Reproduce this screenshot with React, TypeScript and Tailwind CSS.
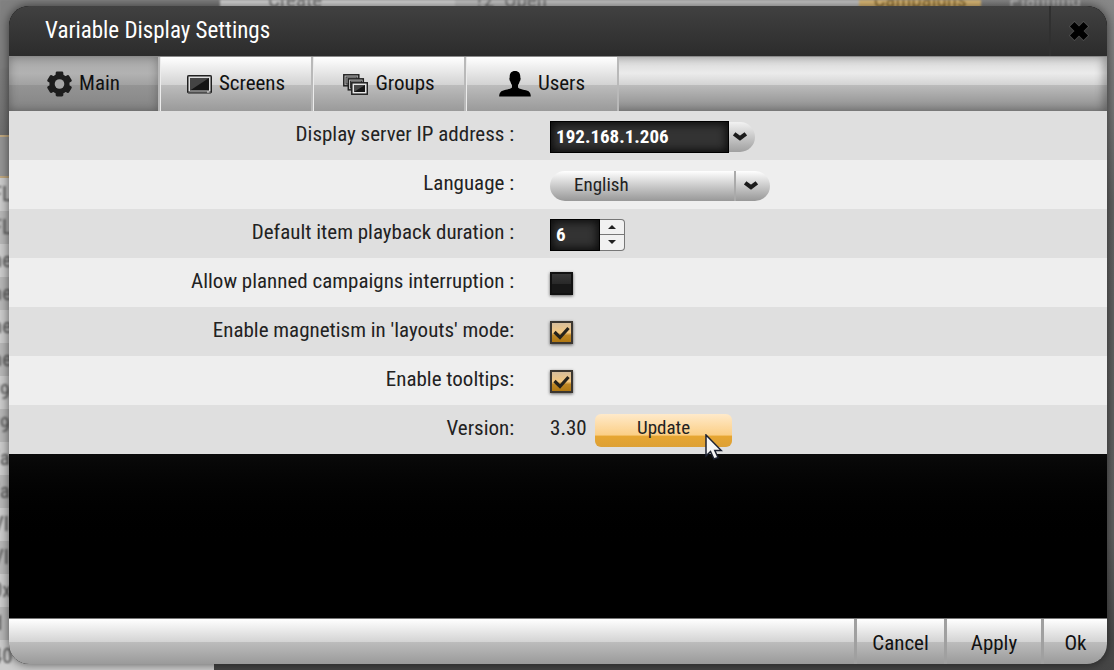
import { ComponentProps, ReactNode, useState } from 'react'
import { twMerge } from 'tailwind-merge'

const glossStyles =
  'bg-[linear-gradient(#ffffff_0%,#d3d3d3_51%,#bcbcbc_52%,#9a9a9a_100%)]'
const fieldStyles =
  'border border-black bg-[#333] px-[5px] font-bold text-white text-[19px] shadow-[inset_0_0_8px_2px_#0c0c0c] outline-none'

/* --- Icons --- */
const GearIcon = () => (
  <svg width="25" height="26" viewBox="0 0 26 26" aria-hidden="true">
    <g fill="#1d1d1d">
      {[0, 60, 120].map((angle) => (
        <rect
          key={angle}
          x="9"
          y="0"
          width="8"
          height="26"
          rx="1.5"
          transform={`rotate(${angle} 13 13)`}
        />
      ))}
      <circle cx="13" cy="13" r="10.5" />
    </g>
    <circle cx="13" cy="13" r="5" fill="#a6a6a6" />
  </svg>
)

const ScreenIcon = () => (
  <svg width="25" height="19" viewBox="0 0 25 19" aria-hidden="true">
    <rect x="0.5" y="0.5" width="24" height="17.5" rx="1" fill="#ddd" stroke="#1c1c1c" />
    <rect x="1" y="1" width="23" height="16" fill="none" stroke="#222" />
    <rect x="3" y="3" width="19" height="12.5" fill="#151515" />
    <path d="M3 3H22L3 15.5Z" fill="#444" />
    <path d="M20 17h2.500" stroke="#eee" />
  </svg>
)

const GroupsIcon = () => (
  <svg width="25" height="21" viewBox="0 0 25 21" aria-hidden="true">
    {[0, 4.5].map((offset) => (
      <g key={offset} transform={`translate(${offset} ${offset * 0.9})`}>
        <rect x="0.8" y="0.8" width="15" height="11" fill="#c9c9c9" stroke="#222" strokeWidth="1.5" />
        <rect x="3" y="3" width="11" height="7" fill="#aaa" stroke="#333" />
      </g>
    ))}
    <rect x="8.800" y="8.800" width="15.500" height="11.400" fill="#e6e6e6" stroke="#222" strokeWidth="1.500" />
    <rect x="11" y="11" width="11" height="7" fill="#151515" />
    <path d="M11 11H22L11 18Z" fill="#484848" />
  </svg>
)

const UserIcon = () => (
  <svg width="32" height="26" viewBox="0 0 32 26" aria-hidden="true">
    <path
      d="M16 0C12 0 10.500 2.500 10.700 6.500C10 7 10.500 10 11.400 10.500C11.800 12.500 12.500 13.500 13 14V16.500C12 18 9 18.300 5 19.300C1.500 20.200 .3 22 .2 25.500H31.800C31.700 22 30.500 20.200 27 19.300C23 18.300 20 18 19 16.500V14C19.500 13.500 20.200 12.500 20.600 10.500C21.500 10 22 7 21.300 6.500C21.500 2.500 20 0 16 0Z"
      fill="#000"
    />
  </svg>
)

const ChevronIcon = () => (
  <svg width="14" height="10" viewBox="0 0 14 10" aria-hidden="true">
    <path d="M2.800 3 7 6.200 11.200 3" fill="none" stroke="#1b1b1b" strokeWidth="4" strokeLinecap="square" />
  </svg>
)

const CloseIcon = () => (
  <svg width="20" height="20" viewBox="0 0 20 20" aria-hidden="true">
    <path d="M5.500 5.500 14.500 14.500M14.500 5.500 5.500 14.500" stroke="#666" strokeWidth="8" strokeLinecap="square" strokeLinejoin="round" opacity=".5" />
    <path d="M5.500 5.500 14.500 14.500M14.500 5.500 5.500 14.500" stroke="#000" strokeWidth="6.500" strokeLinecap="square" />
  </svg>
)

const CursorIcon = () => (
  <svg
    width="18"
    height="26"
    viewBox="0 0 18 26"
    className="pointer-events-none absolute top-5 left-[110px]"
    aria-hidden="true"
  >
    <path d="M1 1V22L5.500 17.500 9 25 13 23.500 9.800 16.500H16.300Z" fill="#f5f5f5" stroke="#1c2130" strokeWidth="1.500" />
  </svg>
)

/* --- Tab --- */
type TabProps = ComponentProps<'button'> & { icon: ReactNode; active?: boolean }

const Tab = ({ icon, active, children, className, ...props }: TabProps) => (
  <button
    role="tab"
    aria-selected={active}
    className={twMerge(
      'flex w-[153px] items-center justify-center gap-[7px] border-r-2 border-r-[#b9b9b9] border-l border-l-[#ececec] text-[21px] text-[#111]',
      glossStyles,
      active &&
        'w-[151px] border-l-0 bg-[linear-gradient(#aaaaaa_0%,#b2b2b2_30%,#a2a2a2_51%,#949494_52%,#848484_100%)] shadow-[inset_0_0_10px_rgba(0,0,0,0.3)]',
      className
    )}
    {...props}
  >
    {icon}
    {children}
  </button>
)

/* --- Row --- */
type RowProps = { label: string; htmlFor?: string; children: ReactNode }

const Row = ({ label, htmlFor, children }: RowProps) => (
  <div className="flex h-[49px] items-center gap-9 odd:bg-[#dfdfdf] even:bg-[#eee]">
    <label htmlFor={htmlFor} className="w-[46%] pb-0.5 text-right">
      {label}
    </label>
    <div className="flex items-center pt-0.5">{children}</div>
  </div>
)

/* --- Checkbox --- */
const Checkbox = ({ className, ...props }: ComponentProps<'input'>) => (
  <span className="relative flex">
    <input
      type="checkbox"
      className={twMerge(
        'peer size-[23px] appearance-none border-2 border-[#111] bg-[linear-gradient(#373737_0%,#292929_50%,#181818_55%,#181818_100%)] shadow-[0_1px_3px_rgba(0,0,0,0.6)] checked:border-[#3b3630] checked:bg-[linear-gradient(#d6bd9b_0%,#f5c880_50%,#bd8625_65%,#b17812_100%)]',
        className
      )}
      {...props}
    />
    <svg
      viewBox="0 0 23 23"
      className="pointer-events-none absolute inset-0 hidden size-full peer-checked:block"
      aria-hidden="true"
    >
      <path d="M4.500 11 10 16.500 18.500 7" fill="none" stroke="#25221c" strokeWidth="3.200" />
    </svg>
  </span>
)

/* --- FooterButton --- */
const FooterButton = ({ children, className, ...props }: ComponentProps<'button'>) => (
  <button
    className={twMerge(
      'border-l-3 border-[#a0a0a0] pt-1 text-[21px] text-[#111]',
      className
    )}
    {...props}
  >
    {children}
  </button>
)

/* --- Backdrop --- */
const backdropRows = ['FL', 'FL', 'ne', 'ne', 'ne', 'ne', '/9', '/9', '/a', '/a', 'VI', 'VI', '0x', 'd', '40']

const Backdrop = () => (
  <div
    className="absolute inset-0 flex flex-col bg-[linear-gradient(#888888_0%,#777777_15%,#636363_30%,#606060_80%,#454545_100%)] text-[21px]"
    aria-hidden="true"
  >
    <div className="flex h-[69px] shrink-0 items-start overflow-hidden leading-none text-[#777] blur-[1px]">
      <div className="h-full w-[220px] bg-[#808080]" />
      <div className="flex h-full w-[235px] bg-[#dcdcdc]">
        <span className="-mt-2.5 ml-12">Create</span>
      </div>
      <div className="h-full w-[404px] bg-[#cbcbcb]">
        <span className="-mt-2.5 ml-5 block">?2 &nbsp;Open</span>
      </div>
      <div className="h-full w-[122px] bg-[#e5c17a] text-center text-[#8a6b30]">
        <span className="-mt-2.5 block">Campaigns</span>
      </div>
      <span className="-mt-2.5 ml-7 text-[#c5c5c5]">Planning</span>
    </div>
    <div className="mt-[66px] h-[43px] w-[214px] shrink-0 border-y-2 border-[#c0a880] bg-[#959595]" />
    <div className="w-[214px] text-[#555]">
      {backdropRows.map((text, index) => (
        <div
          key={index}
          className="flex h-[33px] items-center odd:bg-[#cdcdcd] even:bg-[#b8b8b8]"
        >
          <span className="-ml-2 blur-[1px]">{text}</span>
        </div>
      ))}
    </div>
  </div>
)

export default function App() {
  const [tab, setTab] = useState('Main')
  const [duration, setDuration] = useState(6)

  const tabs = [
    { name: 'Main', icon: <GearIcon /> },
    { name: 'Screens', icon: <ScreenIcon /> },
    { name: 'Groups', icon: <GroupsIcon /> },
    { name: 'Users', icon: <UserIcon /> }
  ]

  return (
    <main className="relative flex h-screen overflow-hidden pt-1.5 pr-[7px] pb-1.5 pl-[9px] font-['Roboto_Condensed','Roboto','Liberation_Sans',sans-serif] text-[21px] text-[#222]">
      <Backdrop />

      <section
        role="dialog"
        aria-labelledby="dialog-title"
        className="relative flex min-w-0 flex-1 flex-col overflow-hidden rounded-[20px] bg-black shadow-[0_0_10px_1px_rgba(0,0,0,0.5)]"
      >
        <header className="flex h-[50px] shrink-0 items-stretch justify-between bg-linear-to-b from-[#414141] to-[#2c2c2c] pl-9">
          <h1 id="dialog-title" className="self-center text-[23px] text-white">
            Variable Display Settings
          </h1>
          <button
            aria-label="Close"
            className="flex w-[58px] items-center justify-center border-l-2 border-[#303030]"
          >
            <CloseIcon />
          </button>
        </header>

        <div
          role="tablist"
          className="flex h-[55px] shrink-0 border-t border-[#8b8b8b] bg-[linear-gradient(#d5d5d5_0%,#ebebeb_30%,#d4d4d4_51%,#bcbcbc_52%,#8a8a8a_100%)] shadow-[inset_-4px_0_8px_rgba(0,0,0,0.3)]"
        >
          {tabs.map(({ name, icon }) => (
            <Tab
              key={name}
              icon={icon}
              active={tab === name}
              onClick={() => setTab(name)}
            >
              {name}
            </Tab>
          ))}
        </div>

        <form onSubmit={(event) => event.preventDefault()}>
          <Row label="Display server IP address :" htmlFor="server">
            <input
              id="server"
              defaultValue="192.168.1.206"
              className={twMerge(fieldStyles, 'h-8 w-[179px]')}
            />
            <button
              aria-label="Known servers"
              className="flex h-[30px] w-[26px] items-center rounded-r-full bg-linear-to-b from-[#f2f2f2] to-[#a0a0a0] pl-1"
            >
              <ChevronIcon />
            </button>
          </Row>

          <Row label="Language :" htmlFor="language">
            <div className="relative flex">
              <select
                id="language"
                className="h-[30px] w-[220px] appearance-none rounded-full bg-linear-to-b from-white to-[#989898] pl-6 text-[19px] outline-none"
              >
                <option>English</option>
              </select>
              <span className="pointer-events-none absolute inset-y-0 right-0 flex w-9 items-center border-l-2 border-[#aaa] pl-2">
                <ChevronIcon />
              </span>
            </div>
          </Row>

          <Row label="Default item playback duration :" htmlFor="duration">
            <input
              id="duration"
              inputMode="numeric"
              value={duration}
              onChange={(event) => setDuration(Number(event.target.value) || 0)}
              className={twMerge(fieldStyles, 'h-8 w-[50px]')}
            />
            <div className="flex h-8 w-[25px] flex-col divide-y divide-[#777] overflow-hidden rounded-r border border-l-0 border-[#777] bg-[#f1f1f1]">
              <button
                aria-label="Increase"
                className="flex flex-1 items-center justify-center"
                onClick={() => setDuration(duration + 1)}
              >
                <svg width="8" height="4" viewBox="0 0 8 4">
                  <path d="M0 4 4 0 8 4Z" fill="#222" />
                </svg>
              </button>
              <button
                aria-label="Decrease"
                className="flex flex-1 items-center justify-center"
                onClick={() => setDuration(duration - 1)}
              >
                <svg width="8" height="4" viewBox="0 0 8 4">
                  <path d="M0 0 4 4 8 0Z" fill="#222" />
                </svg>
              </button>
            </div>
          </Row>

          <Row label="Allow planned campaigns interruption :" htmlFor="interruption">
            <Checkbox id="interruption" />
          </Row>

          <Row label="Enable magnetism in 'layouts' mode:" htmlFor="magnetism">
            <Checkbox id="magnetism" defaultChecked />
          </Row>

          <Row label="Enable tooltips:" htmlFor="tooltips">
            <Checkbox id="tooltips" defaultChecked />
          </Row>

          <Row label="Version:" htmlFor="update">
            <output className="w-[45px] pb-1">3.30</output>
            <div className="relative">
              <button
                id="update"
                className="flex h-[33px] w-[137px] items-center justify-center rounded-md bg-[linear-gradient(#ffeaca_0%,#fbcf87_63%,#e6a632_68%,#dda035_100%)] pb-1 text-[19px]"
              >
                Update
              </button>
              <CursorIcon />
            </div>
          </Row>
        </form>

        <div className="flex-1 bg-linear-to-b from-[#0a0a0a] to-black to-60%" />

        <footer
          className={twMerge(
            'flex h-[46px] shrink-0 justify-end border-t border-[#777]',
            glossStyles
          )}
        >
          <FooterButton className="w-[90px]">Cancel</FooterButton>
          <FooterButton className="w-[97px]">Apply</FooterButton>
          <FooterButton className="w-[66px]">Ok</FooterButton>
        </footer>
      </section>
    </main>
  )
}
